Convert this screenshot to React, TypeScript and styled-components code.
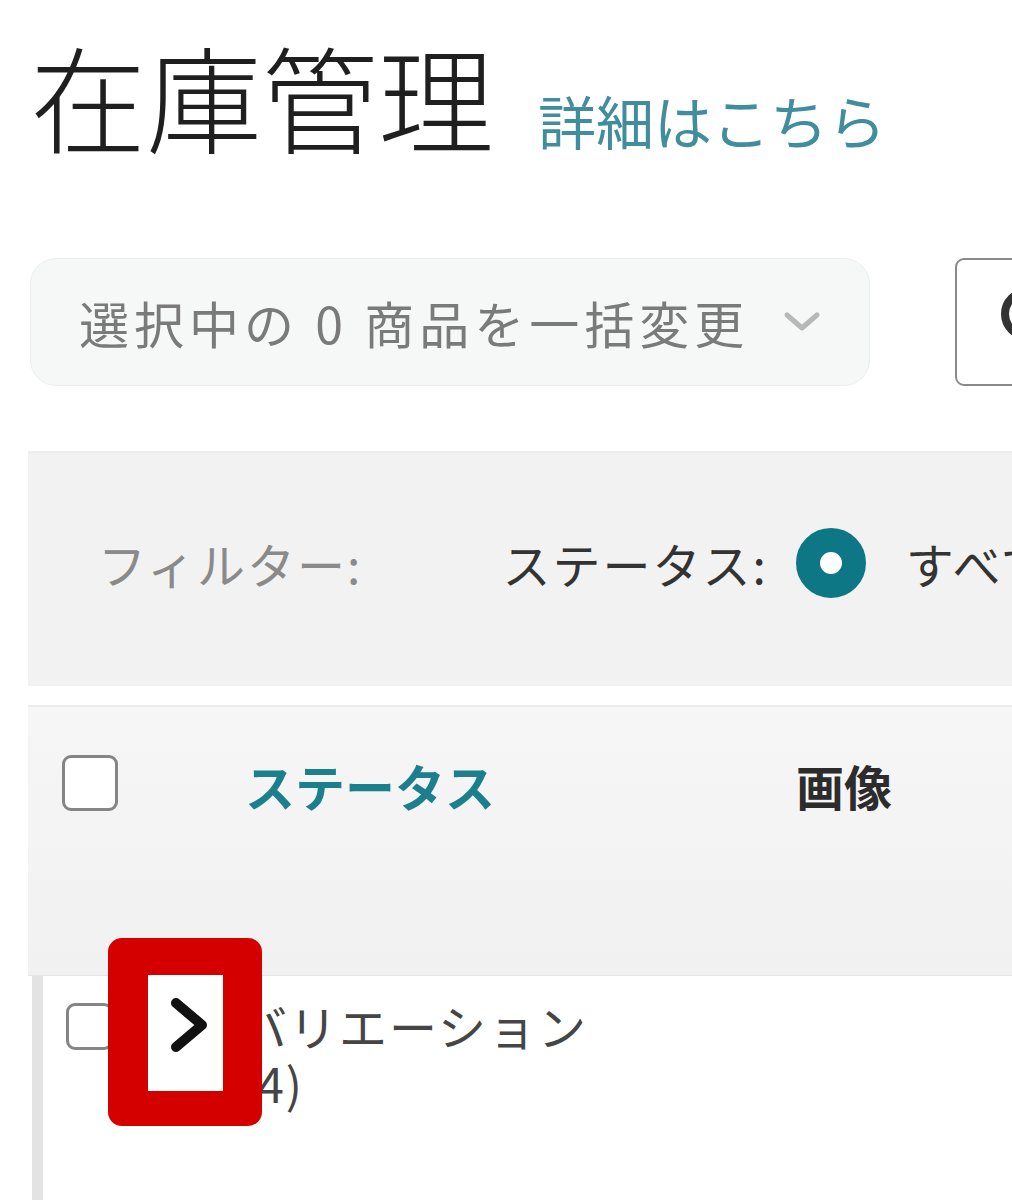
import React from "react";
import styled, { createGlobalStyle } from "styled-components";

const Global = createGlobalStyle`
  html, body { margin: 0; padding: 0; background: #ffffff; }
  body {
    font-family: "Noto Sans CJK JP", "Noto Sans", "Liberation Sans", sans-serif;
    overflow: hidden;
  }
  * { box-sizing: border-box; }
`;

const Page = styled.div`
  width: 1012px;
  height: 1200px;
  overflow: hidden;
  display: flex;
  flex-direction: column;
`;

const TitleRow = styled.div`
  display: flex;
  align-items: baseline;
  gap: 44px;
  padding: 36px 0 0 30px;
`;

const Title = styled.h1`
  margin: 0;
  font-size: 116px;
  line-height: 1;
  font-weight: 300;
  color: #1f1f1f;
  letter-spacing: 0;
  white-space: nowrap;
`;

const LearnMore = styled.a`
  font-size: 58px;
  line-height: 1;
  color: #3f8d9d;
  text-decoration: none;
  white-space: nowrap;
`;

const Toolbar = styled.div`
  display: flex;
  align-items: stretch;
  gap: 85px;
  margin-top: 106px;
  padding-left: 30px;
  height: 128px;
`;

const BulkSelect = styled.div`
  width: 840px;
  flex-shrink: 0;
  display: flex;
  align-items: center;
  gap: 32px;
  padding-left: 48px;
  background: #f6f7f7;
  border: 1px solid #eceeee;
  border-radius: 26px;
  color: #7a7a7a;
  font-size: 50px;
  letter-spacing: 5px;
  white-space: nowrap;
`;

const SearchBox = styled.div`
  width: 300px;
  flex-shrink: 0;
  display: flex;
  align-items: center;
  padding-left: 38px;
  border: 2px solid #8a8a8a;
  border-radius: 9px;
  background: #ffffff;
`;

const FilterPanel = styled.div`
  margin: 65px 0 0 28px;
  height: 235px;
  width: 1100px;
  flex-shrink: 0;
  background: #f2f2f2;
  border-top: 2px solid #ededed;
  display: flex;
  align-items: center;
  padding: 0 0 14px 70px;
  font-size: 48px;
  letter-spacing: 2px;
  white-space: nowrap;
`;

const FilterLabel = styled.span<{ $muted?: boolean }>`
  color: ${(p) => (p.$muted ? "#8a8a8a" : "#333333")};
  margin-right: ${(p) => (p.$muted ? "140px" : "28px")};
`;

const Radio = styled.span`
  width: 70px;
  height: 70px;
  flex-shrink: 0;
  border-radius: 50%;
  border: 24px solid #0d7785;
  background: #ffffff;
  margin-right: 40px;
`;

const RadioText = styled.span`
  color: #333333;
`;

const Table = styled.div`
  margin: 19px 0 0 28px;
  width: 1100px;
  flex: 1;
  display: flex;
  flex-direction: column;
`;

const HeaderRow = styled.div`
  height: 271px;
  flex-shrink: 0;
  background: linear-gradient(#f6f6f6, #f1f1f1);
  border-top: 2px solid #ececec;
  display: flex;
  align-items: flex-start;
  padding: 48px 0 0 34px;
  border-bottom: 1px solid #e4e4e4;
`;

const Checkbox = styled.span<{ $size: number }>`
  width: ${(p) => p.$size}px;
  height: ${(p) => p.$size}px;
  flex-shrink: 0;
  border: 3px solid #858585;
  border-radius: 9px;
  background: #ffffff;
`;

const HeaderCell = styled.span<{ $link?: boolean; $offset: number }>`
  margin-left: ${(p) => p.$offset}px;
  font-size: ${(p) => (p.$link ? 50 : 48)}px;
  line-height: 60px;
  font-weight: 700;
  color: ${(p) => (p.$link ? "#1c7f8e" : "#2c2c2c")};
  white-space: nowrap;
`;

const BodyRow = styled.div`
  position: relative;
  flex: 1;
  margin-left: 4px;
  background: #ffffff;
  border-left: 11px solid #e3e3e3;
  display: flex;
  align-items: flex-start;
  padding: 27px 0 0 23px;
`;

const VariationText = styled.div`
  margin-left: 126px;
  margin-top: -6px;
  font-size: 48px;
  line-height: 57px;
  letter-spacing: 2px;
  color: #454545;
  white-space: nowrap;
`;

const Annotation = styled.div`
  position: absolute;
  left: 65px;
  top: -38px;
  width: 154px;
  height: 188px;
  border-style: solid;
  border-color: #d40000;
  border-width: 37px 39px 35px 40px;
  border-radius: 14px;
  background: #ffffff;
  padding: 21px 0 0 20px;
`;

const ChevronDown = () => (
  <svg width="42" height="26" viewBox="0 0 42 26" fill="none">
    <path d="M6 6 L21 19 L36 6" stroke="#b8b8b8" strokeWidth="5" strokeLinecap="round" strokeLinejoin="round" />
  </svg>
);

const SearchIcon = () => (
  <svg width="80" height="80" viewBox="0 0 80 80" fill="none">
    <circle cx="32" cy="32" r="22" stroke="#333333" strokeWidth="8" />
    <path d="M49 49 L70 70" stroke="#333333" strokeWidth="8" strokeLinecap="round" />
  </svg>
);

const ChevronRight = () => (
  <svg width="42" height="58" viewBox="0 0 42 58" fill="none">
    <path d="M8 7 L34 29 L8 51" stroke="#111111" strokeWidth="10" strokeLinecap="round" strokeLinejoin="round" />
  </svg>
);

export default function App() {
  return (
    <>
      <Global />
      <Page>
        <TitleRow>
          <Title>在庫管理</Title>
          <LearnMore href="#">詳細はこちら</LearnMore>
        </TitleRow>
        <Toolbar>
          <BulkSelect>
            <span>選択中の 0 商品を一括変更</span>
            <ChevronDown />
          </BulkSelect>
          <SearchBox>
            <SearchIcon />
          </SearchBox>
        </Toolbar>
        <FilterPanel>
          <FilterLabel $muted>フィルター:</FilterLabel>
          <FilterLabel>ステータス:</FilterLabel>
          <Radio />
          <RadioText>すべて</RadioText>
        </FilterPanel>
        <Table>
          <HeaderRow>
            <Checkbox $size={56} />
            <HeaderCell $link $offset={127}>ステータス</HeaderCell>
            <HeaderCell $offset={301}>画像</HeaderCell>
          </HeaderRow>
          <BodyRow>
            <Checkbox $size={47} />
            <VariationText>
              バリエーション
              <br />
              (4)
            </VariationText>
            <Annotation>
              <ChevronRight />
            </Annotation>
          </BodyRow>
        </Table>
      </Page>
    </>
  );
}
